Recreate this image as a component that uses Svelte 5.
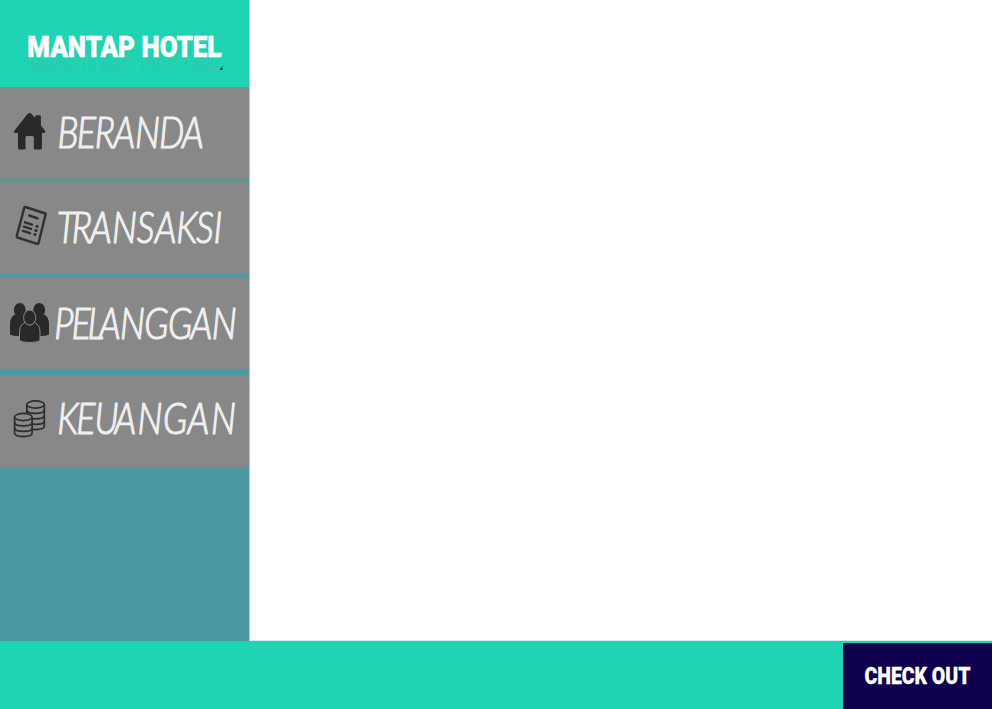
<script>
  const squeeze = 0.83;
  const items = [
    { label: 'BERANDA', icon: 'home', xs: [57.500, 76.800, 94.800, 113.500, 135, 159, 182], y: 61, gap: 3 },
    { label: 'TRANSAKSI', icon: 'receipt', xs: [56.800, 71.800, 90, 112, 136.800, 154.800, 176.200, 196, 213.500], y: 61, gap: 4 },
    { label: 'PELANGGAN', icon: 'people', xs: [54.300, 71.500, 87.500, 99, 120, 144.200, 168, 190.500, 211.800], y: 60.8, gap: 5 },
    { label: 'KEUANGAN', icon: 'coins', xs: [57.200, 76.200, 94.500, 114.500, 137.500, 163, 187.500, 211], y: 59.5, gap: 0 }
  ];
</script>

<div class="app">
  <div class="main">
    <aside>
      <header>
        <svg width="249" height="87" viewBox="0 0 249 87">
          <text class="ghost" x="27" y="70.500" textLength="194" lengthAdjust="spacingAndGlyphs" aria-hidden="true">MANTAP HOTEL</text>
          <text class="brand" x="27.300" y="56.700" textLength="194" lengthAdjust="spacingAndGlyphs">MANTAP HOTEL</text>
          <path d="M218 57h2.500l2-3.500-2 .500z" fill="#fff" />
          <path d="M220 70v-1.500l1.500-.500 1-2.500v4.500z" fill="#08366c" />
        </svg>
      </header>
      <nav>
        {#each items as item}
          <a href="#{item.icon}" style:margin-bottom="{item.gap}px">
            <svg width="249" height="92" viewBox="0 0 249 92">
              {#if item.icon === 'home'}
                <path d="M14.500 43.500 27.500 27q2-2 4 0l3.800 4V29.500q0-1.200 1.200-1.200h3.200q1.200 0 1.200 1.200v9l4 5q1 2.500-1 2.500h-2V61q0 1.500-1.500 1.500h-5.600q-1 0-1-1V50.500q0-1.500-1.500-1.500H27q-1.500 0-1.500 1.500v11q0 1-1 1h-5q-1.500 0-1.500-1.500V46h-2.500q-2.500 0-1-2.500z" fill="#292929" />
              {:else if item.icon === 'receipt'}
                <g fill="none" stroke="#303030" stroke-linecap="round" stroke-linejoin="round">
                  <path d="M25.500 25 45.200 31.500q.6.200.4.900L38.500 61.200q-.2.900-1.200.6L17.300 55.500q-.8-.3-.6-1.200L24.300 25.600q.2-.8 1.200-.6z" stroke-width="2.400" />
                  <path d="M29.300 33.500l8.200 2.900M25 40.300l7 2.300M24 44.600l7 2.300M23 48.900l7 2.300" stroke-width="2.400" />
                  <path d="M36.800 44.400l.4.100M35.800 48.500l.4.100M34.800 52.500l.4.100" stroke-width="2.900" />
                </g>
              {:else if item.icon === 'people'}
                <g fill="#292929">
                  <ellipse cx="19.800" cy="32" rx="5.900" ry="6.900" />
                  <ellipse cx="39.200" cy="32" rx="5.900" ry="6.900" />
                  <path d="M10 56.500V46q0-7 5-9.500 5 4 9 0l5 2.500v19H18q-5 0-8-1.500z" />
                  <path d="M49 56.500V46q0-7-5-9.500-5 4-9 0l-5 2.500v19h11q5 0 8-1.500z" />
                  <path d="M19.500 62.500V54q0-7 5.500-9.500 4.700 5 9.500 0 5.500 2.500 5.500 9.500v8.500q-2.500 2-10 2t-10.500-2z" stroke="#888" />
                  <ellipse cx="29.700" cy="39.500" rx="6.100" ry="7.500" stroke="#888" />
                </g>
              {:else}
                <g fill="#888" stroke="#2d2d2d" stroke-width="1.700">
                  <path d="M26.800 29.500V51c0 4.700 17.500 4.700 17.500 0V29.500" />
                  <ellipse cx="35.550" cy="29.500" rx="8.750" ry="3.600" />
                  <path d="M26.800 35c0 4.500 17.500 4.500 17.500 0M26.800 40.500c0 4.500 17.500 4.500 17.500 0M26.800 46c0 4.500 17.500 4.500 17.500 0" fill="none" />
                  <path d="M14.600 42V58c0 4.700 17.500 4.700 17.500 0V42" />
                  <ellipse cx="23.350" cy="42" rx="8.750" ry="3.600" />
                  <path d="M14.600 47.500c0 4.500 17.500 4.500 17.500 0M14.600 53c0 4.500 17.500 4.500 17.500 0" fill="none" />
                </g>
              {/if}
              <text class="label" transform="scale({squeeze} 1)" x={item.xs.map((x) => x / squeeze).join(' ')} y={item.y}>{item.label}</text>
            </svg>
          </a>
        {/each}
      </nav>
    </aside>
    <main></main>
  </div>
  <footer>
    <button>
      <svg width="149" height="66" viewBox="0 0 149 66">
        <text class="checkout" x="21.500" y="40.500" textLength="106" lengthAdjust="spacingAndGlyphs">CHECK OUT</text>
      </svg>
    </button>
  </footer>
</div>

<style>
  :global(body) {
    margin: 0;
    background: #fff;
  }
  .app {
    display: flex;
    flex-direction: column;
    width: 992px;
    height: 709px;
  }
  .main {
    display: flex;
    height: 641px;
  }
  aside {
    box-sizing: border-box;
    width: 250px;
    background: #4b9aa2;
    border-right: 1px solid #b4c8c9;
  }
  header {
    height: 87px;
    background: #1fd4b3;
  }
  nav {
    display: flex;
    flex-direction: column;
  }
  a {
    display: block;
    height: 92px;
    background: #888;
    text-decoration: none;
  }
  svg {
    display: block;
    overflow: visible;
  }
  main {
    box-sizing: border-box;
    flex: 1;
    background: #fff;
    border-bottom: 1px solid #c6f4ea;
  }
  footer {
    display: flex;
    justify-content: flex-end;
    align-items: flex-end;
    height: 68px;
    background: #1fd4b3;
  }
  button {
    width: 149px;
    height: 66px;
    padding: 0;
    border: 0;
    background: #0e004c;
  }
  .brand,
  .ghost {
    font: 900 29.5px Roboto, sans-serif;
    fill: #fff;
  }
  .brand {
    stroke: #fff;
    stroke-width: 0.5px;
  }
  .ghost {
    fill: none;
    stroke: #3bbfae;
    stroke-width: 0.8px;
    opacity: 0.75;
  }
  .label {
    font: italic 300 43px Lato, sans-serif;
    fill: #f0f0f0;
    stroke: #f0f0f0;
    stroke-width: 1.2px;
    stroke-linejoin: round;
  }
  .checkout {
    font: 900 23.5px Roboto, sans-serif;
    fill: #fff;
    stroke: #fff;
    stroke-width: 0.3px;
  }
</style>
